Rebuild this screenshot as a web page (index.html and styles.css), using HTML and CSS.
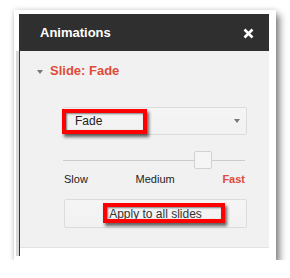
FILE: index.html
```html
<!DOCTYPE html>
<html lang="en">
<head>
    <meta charset="UTF-8">
    <meta name="viewport" content="width=device-width, initial-scale=1.0">
    <title>Animations</title>
    <link rel="stylesheet" href="styles.css">
</head>
<body>
    <div class="frame">
        <div class="panel">
            <div class="panel-header">
                <span class="panel-title">Animations</span>
                <svg class="close" width="11" height="11" viewBox="0 0 11 11">
                    <path d="M1.5 1.5 L9.5 9.5 M9.5 1.5 L1.5 9.5" stroke="#fff" stroke-width="2.6" fill="none"/>
                </svg>
            </div>
            <div class="panel-body">
                <div class="section">
                    <div class="section-title"><span class="caret"></span>Slide: Fade</div>

                    <div class="select">
                        <span>Fade</span>
                        <span class="select-arrow"></span>
                        <div class="mark mark-select"></div>
                    </div>

                    <div class="slider">
                        <div class="track"></div>
                        <div class="thumb"></div>
                        <div class="track track-rest"></div>
                    </div>

                    <div class="speeds">
                        <span>Slow</span>
                        <span>Medium</span>
                        <span class="fast">Fast</span>
                    </div>

                    <div class="apply-btn">
                        Apply to all slides
                        <div class="mark mark-apply"></div>
                    </div>
                </div>
                <div class="panel-footer"></div>
            </div>
        </div>
    </div>
</body>
</html>
```

FILE: styles.css
```css
body {
    font-family: "Liberation Sans", Arial, sans-serif;
    background-color: #fff;
    margin: 0;
}

.frame {
    margin: 10px 0 0 14px;
    width: 262px;
    height: 250px;
    padding: 4px 7px 4px 5px;
    box-sizing: border-box;
    background-color: #fff;
    box-shadow: 0 0 5px rgba(0, 0, 0, 0.18), 4px 5px 7px rgba(0, 0, 0, 0.45);
}

.panel {
    height: 100%;
    display: flex;
    flex-direction: column;
}

.panel-header {
    height: 37px;
    background-color: #2f2f2f;
    display: flex;
    align-items: center;
    justify-content: space-between;
    padding: 0 15px 0 21px;
}

.panel-title {
    color: #fff;
    font-weight: bold;
    font-size: 13px;
}

.close {
    display: block;
    margin-top: 1px;
}

.panel-body {
    flex: 1;
    display: flex;
    flex-direction: column;
    border-left: 1px solid #333;
    box-shadow: -3px 0 0 #d8d8d8;
}

.section {
    background-color: #f1f1f1;
    height: 197px;
    box-sizing: border-box;
    padding: 12px 22px 0 17px;
    border-bottom: 1px solid #e2e2e2;
}

.panel-footer {
    flex: 1;
    background-color: #fff;
}

.section-title {
    display: flex;
    align-items: center;
    color: #dd4b39;
    font-weight: bold;
    font-size: 13px;
    line-height: 16px;
}

.caret {
    width: 0;
    height: 0;
    border-left: 3.5px solid transparent;
    border-right: 3.5px solid transparent;
    border-top: 4px solid #777;
    margin-right: 7px;
    margin-top: 1px;
}

.select {
    position: relative;
    margin: 28px 0 0 26px;
    height: 28px;
    box-sizing: border-box;
    border: 1px solid #dcdcdc;
    border-radius: 2px;
    background: linear-gradient(#f5f5f5, #f1f1f1);
    display: flex;
    align-items: center;
    justify-content: space-between;
    padding: 0 6px 0 11px;
    font-size: 12px;
    color: #222;
}

.select-arrow {
    width: 0;
    height: 0;
    border-left: 3.5px solid transparent;
    border-right: 3.5px solid transparent;
    border-top: 4px solid #777;
}

.slider {
    display: flex;
    align-items: center;
    margin: 16px 2px 0 26px;
}

.track {
    flex: 1;
    height: 1px;
    background-color: #ccc;
}

.track-rest {
    flex: none;
    width: 33px;
}

.thumb {
    width: 18px;
    height: 18px;
    box-sizing: border-box;
    border: 1px solid #d2d2d2;
    border-radius: 2px;
    background-color: #f5f5f5;
}

.speeds {
    display: flex;
    justify-content: space-between;
    margin: 3px 2px 0 27px;
    font-size: 11px;
    line-height: 14px;
    color: #222;
}

.fast {
    color: #dd4b39;
    font-weight: bold;
}

.apply-btn {
    position: relative;
    margin: 13px 0 0 27px;
    height: 29px;
    box-sizing: border-box;
    border: 1px solid #dcdcdc;
    border-radius: 2px;
    background: linear-gradient(#f5f5f5, #f1f1f1);
    display: flex;
    align-items: center;
    justify-content: center;
    font-size: 12px;
    color: #333;
}

.mark {
    position: absolute;
    border: 4px solid #f00;
    box-sizing: border-box;
    box-shadow: 2px 3px 3px rgba(0, 0, 0, 0.6), inset 1px 1px 2px rgba(0, 0, 0, 0.5);
}

.mark-select {
    left: -2px;
    top: 1px;
    width: 85px;
    height: 25px;
}

.mark-apply {
    left: 38px;
    top: 3px;
    width: 122px;
    height: 20px;
}
```
